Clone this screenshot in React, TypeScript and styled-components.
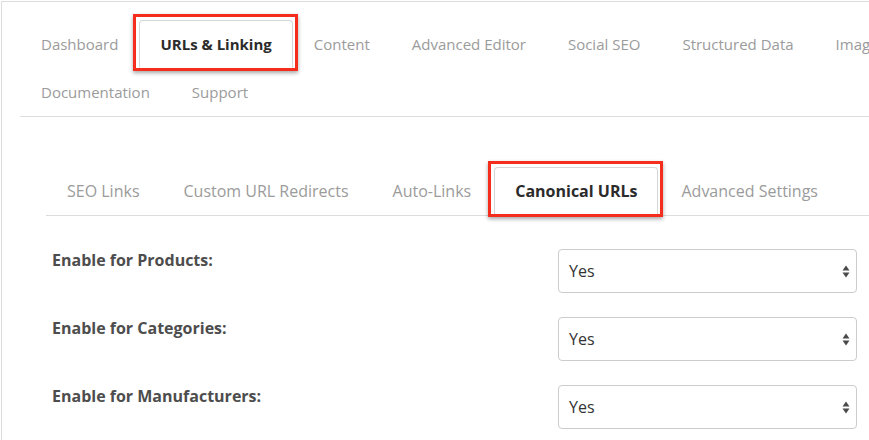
import React from "react";
import styled, { createGlobalStyle } from "styled-components";

const GlobalStyle = createGlobalStyle`
  html, body {
    margin: 0;
    padding: 0;
    background: #ffffff;
    overflow: hidden;
  }
  body {
    font-family: "Open Sans", "Noto Sans", Arial, sans-serif;
    -webkit-font-smoothing: antialiased;
  }
  * { box-sizing: border-box; }
`;

const Page = styled.div`
  margin: 1px 0 0 1px;
  border-top: 1px solid #dcdcdc;
  border-left: 1px solid #dcdcdc;
  height: 439px;
  overflow: hidden;
`;

const TabList = styled.ul<{ $wrapWidth?: string }>`
  list-style: none;
  margin: 0;
  padding: 0;
  display: flex;
  flex-wrap: wrap;
  border-bottom: 1px solid #dddddd;
  width: ${(p) => p.$wrapWidth ?? "auto"};
`;

const MainTabs = styled(TabList)`
  margin: 18px 0 0 18px;
`;

const SubTabs = styled(TabList)`
  margin: 50px 0 0 44px;
  flex-wrap: nowrap;
`;

const Tab = styled.li<{ $active?: boolean; $size: number; $gap: number }>`
  position: relative;
  margin-right: ${(p) => p.$gap}px;
  padding: 12px 20px;
  line-height: 22px;
  font-size: ${(p) => p.$size}px;
  white-space: nowrap;
  color: ${(p) => (p.$active ? "#2b2b2b" : "#9b9b9b")};
  font-weight: ${(p) => (p.$active ? 700 : 400)};
  background: ${(p) => (p.$active ? "#ffffff" : "transparent")};
  border: 1px solid ${(p) => (p.$active ? "#d6d6d6" : "transparent")};
  border-bottom-color: transparent;
  border-radius: 4px 4px 0 0;
`;

const Highlight = styled.span<{ $bottom: number }>`
  position: absolute;
  top: -7px;
  left: -7px;
  right: -6px;
  bottom: ${(p) => p.$bottom}px;
  border: 3px solid #f42d1c;
  box-shadow: 0 2px 4px rgba(0, 0, 0, 0.35);
  pointer-events: none;
`;

const Form = styled.div`
  margin: 33px 0 0 50px;
  display: grid;
  grid-template-columns: 506px 299px;
  row-gap: 24px;
`;

const Label = styled.div`
  font-size: 16px;
  font-weight: 700;
  color: #4d4d4d;
  line-height: 22px;
`;

const SelectBox = styled.div`
  height: 44px;
  border: 1px solid #cccccc;
  border-radius: 4px;
  display: flex;
  align-items: center;
  justify-content: space-between;
  padding: 0 6px 0 10px;
  font-size: 16px;
  color: #333333;
  background: #ffffff;
`;

const Arrows = () => (
  <svg width="8" height="13" viewBox="0 0 8 13" aria-hidden="true">
    <path d="M4 0.5 L7.5 5.5 H0.5 Z" fill="#4a4a4a" />
    <path d="M4 12.5 L7.5 7.5 H0.5 Z" fill="#4a4a4a" />
  </svg>
);

const mainTabs = [
  "Dashboard",
  "URLs & Linking",
  "Content",
  "Advanced Editor",
  "Social SEO",
  "Structured Data",
  "Images",
  "Documentation",
  "Support",
];

const subTabs = [
  "SEO Links",
  "Custom URL Redirects",
  "Auto-Links",
  "Canonical URLs",
  "Advanced Settings",
];

const fields = [
  "Enable for Products:",
  "Enable for Categories:",
  "Enable for Manufacturers:",
];

export default function App() {
  return (
    <>
      <GlobalStyle />
      <Page>
        <MainTabs $wrapWidth="1000px">
          {mainTabs.map((t) => (
            <Tab key={t} $size={15} $gap={0} $active={t === "URLs & Linking"}>
              {t}
              {t === "URLs & Linking" && <Highlight $bottom={-4} />}
            </Tab>
          ))}
        </MainTabs>
        <SubTabs>
          {subTabs.map((t) => (
            <Tab key={t} $size={16} $gap={2} $active={t === "Canonical URLs"}>
              {t}
              {t === "Canonical URLs" && <Highlight $bottom={-3} />}
            </Tab>
          ))}
        </SubTabs>
        <Form>
          {fields.map((f) => (
            <React.Fragment key={f}>
              <Label>{f}</Label>
              <SelectBox>
                <span>Yes</span>
                <Arrows />
              </SelectBox>
            </React.Fragment>
          ))}
        </Form>
      </Page>
    </>
  );
}
